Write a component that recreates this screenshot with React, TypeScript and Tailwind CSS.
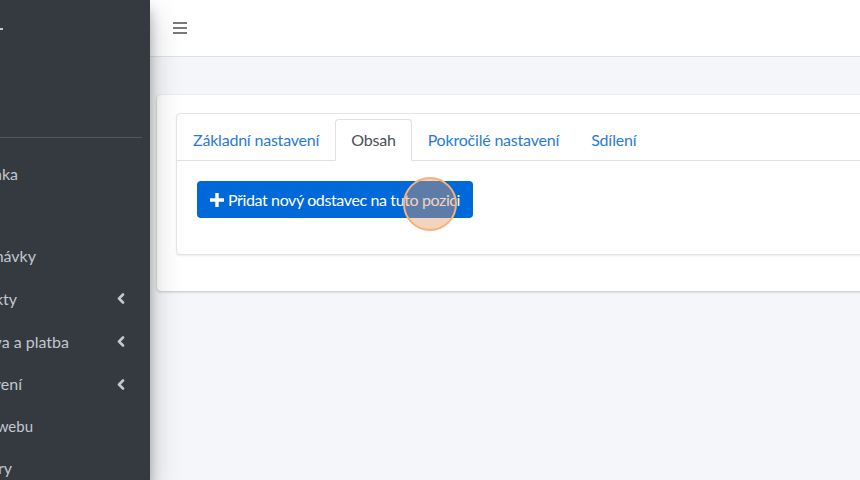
const font = { fontFamily: '"Source Sans Pro", Lato, "Noto Sans", sans-serif' };

type Item = { text: string; end: number; h: string; chevron?: boolean; small?: boolean };

const items: Item[] = [
  { text: "Úvodní stránka", end: 18, h: "h-[42px]" },
  { text: "", end: 0, h: "h-[40px]" },
  { text: "Objednávky", end: 36, h: "h-[42px]" },
  { text: "Produkty", end: 17, h: "h-[43px]", chevron: true },
  { text: "Doprava a platba", end: 69, h: "h-[43px]", chevron: true },
  { text: "Nastavení", end: 22, h: "h-[42px]", chevron: true },
  { text: "Nastavení webu", end: 33, h: "h-[42px]", small: true },
  { text: "Parametry", end: 12, h: "h-[42px]" },
];

function Chevron({ left }: { left: number }) {
  return (
    <svg width="8" height="11" viewBox="0 0 8 11" style={{ marginLeft: left }}>
      <path d="M6 1.5 2 5.5l4 4" fill="none" stroke="#c2c7d0" strokeWidth="2.6" strokeLinecap="round" strokeLinejoin="round" />
    </svg>
  );
}

function Sidebar() {
  return (
    <aside className="relative z-10 h-[480px] w-[150px] shrink-0 overflow-hidden bg-[#343a40] text-[#c2c7d0] shadow-[0_14px_28px_rgba(0,0,0,0.25),0_10px_10px_rgba(0,0,0,0.22)]">
      <div className="flex h-[57px] items-center">
        <div className="h-[2px] w-[3px] bg-[#c2c7d0]" />
      </div>
      <div className="mr-[8px] h-[81px] border-b border-[#4f5962]" />
      <div className="h-[15px]" />
      {items.map((it, i) => (
        <div key={i} className={`flex items-center ${it.h}`}>
          <div className="flex shrink-0 justify-end whitespace-nowrap" style={{ width: it.end }}>
            <span className={it.small ? "text-[15px]" : "text-[16px]"}>{it.text}</span>
          </div>
          {it.chevron && <Chevron left={117 - it.end} />}
        </div>
      ))}
    </aside>
  );
}

function Tabs() {
  const tabs = ["Základní nastavení", "Obsah", "Pokročilé nastavení", "Sdílení"];
  return (
    <div className="flex border-b border-[#dee2e6] pt-[5px] tracking-[-0.2px]">
      {tabs.map((t) =>
        t === "Obsah" ? (
          <div
            key={t}
            className="-mb-px flex h-[42px] items-center rounded-t-[4px] border border-[#dee2e6] border-b-white bg-white px-[15px] text-[#495057]"
          >
            {t}
          </div>
        ) : (
          <div key={t} className="flex h-[41px] items-center px-[16px] text-[#2a7ad6]">
            {t}
          </div>
        )
      )}
    </div>
  );
}

export default function App() {
  return (
    <div className="flex h-[480px] w-[860px] overflow-hidden bg-[#f4f6f9] text-[16px]" style={font}>
      <Sidebar />
      <main className="flex min-w-0 flex-1 flex-col">
        <header className="flex h-[57px] shrink-0 items-center border-b border-[#dee2e6] bg-white pl-[23px]">
          <div className="flex w-[14px] flex-col gap-[3px]">
            <span className="h-[2px] bg-[#7a7a7a]" />
            <span className="h-[2px] bg-[#7a7a7a]" />
            <span className="h-[2px] bg-[#7a7a7a]" />
          </div>
        </header>
        <div className="pl-[7px] pt-[38px]">
          <div className="-mr-[40px] rounded-[4px] bg-white px-[19px] pb-[36px] pt-[18px] shadow-[0_0_1px_rgba(0,0,0,0.125),0_1px_3px_rgba(0,0,0,0.2)]">
            <div className="rounded-[4px] border border-[#e3e6e9] bg-white shadow-[0_1px_2px_rgba(0,0,0,0.08)]">
              <Tabs />
              <div className="px-[20px] pb-[36px] pt-[20px]">
                <div className="relative inline-block">
                  <button className="flex h-[37px] items-center gap-[4px] rounded-[4px] bg-[#0069d9] pl-[13px] pr-[13px] text-white">
                    <svg width="14" height="14" viewBox="0 0 14 14">
                      <path d="M5.3 0h3.4v5.3H14v3.4H8.7V14H5.3V8.7H0V5.3h5.3z" fill="#fff" />
                    </svg>
                    <span className="tracking-[-0.38px]">Přidat nový odstavec na tuto pozici</span>
                  </button>
                  <span className="pointer-events-none absolute left-[206px] top-[-4px] h-[54px] w-[54px] rounded-full border-2 border-[#f5b27a] bg-[rgba(225,150,100,0.42)]" />
                </div>
              </div>
            </div>
          </div>
        </div>
      </main>
    </div>
  );
}
